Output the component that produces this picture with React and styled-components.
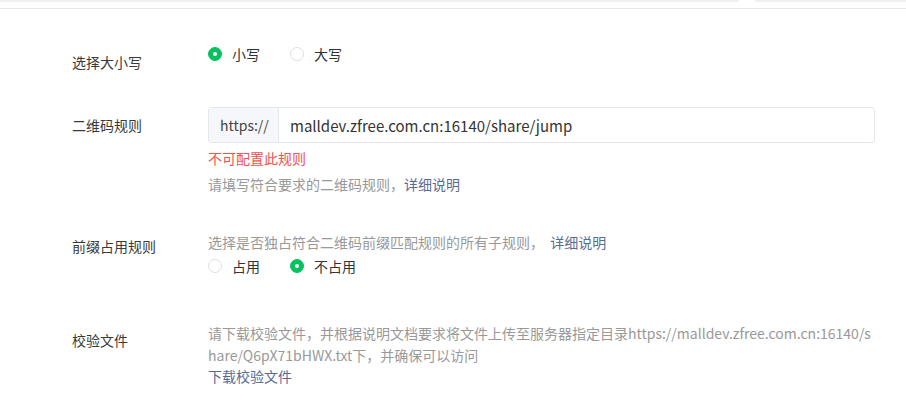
import React from "react";
import styled, { createGlobalStyle } from "styled-components";

const GlobalStyle = createGlobalStyle`
  html, body {
    margin: 0;
    padding: 0;
    background: #fff;
  }
  body {
    font-family: "Noto Sans CJK SC", "Noto Sans", sans-serif;
    font-size: 14px;
    color: #333;
  }
`;

const Page = styled.div`
  width: 906px;
  height: 415px;
  overflow: hidden;
  background: #fff;
`;

const TopStrip = styled.div`
  display: flex;
  gap: 16px;
  height: 2px;

  span {
    background: #f0f0f0;
  }
  span:first-child {
    width: 739px;
  }
  span:last-child {
    flex: 1;
  }
`;

const Divider = styled.div`
  margin-top: 6px;
  height: 1px;
  background: #e8e8e8;
`;

const Form = styled.div`
  padding: 35px 31px 0 72px;
`;

const FormItem = styled.div`
  display: flex;
  align-items: flex-start;
  margin-bottom: ${(p) => p.$mb || 40}px;
`;

const Label = styled.div`
  width: 136px;
  flex-shrink: 0;
  line-height: ${(p) => p.$lh || 36}px;
  color: #3a3a3a;
  font-size: 14px;
`;

const Content = styled.div`
  flex: 1;
  min-width: 0;
`;

const RadioGroup = styled.div`
  display: flex;
  align-items: center;
  height: 20px;
  margin-top: ${(p) => p.$mt || 0}px;
`;

const RadioItem = styled.label`
  display: flex;
  align-items: center;
  margin-right: 30px;
  color: #333;
  font-size: 14px;
  line-height: 20px;
  cursor: pointer;
`;

const RadioCircle = styled.span`
  width: 14px;
  height: 14px;
  box-sizing: border-box;
  border-radius: 50%;
  border: 1px solid ${(p) => (p.$checked ? "#07c160" : "#dcdfe6")};
  background: ${(p) => (p.$checked ? "#07c160" : "#fff")};
  display: flex;
  align-items: center;
  justify-content: center;
  margin-right: 10px;

  &::after {
    content: "";
    width: 4px;
    height: 4px;
    border-radius: 50%;
    background: #fff;
    display: ${(p) => (p.$checked ? "block" : "none")};
  }
`;

const InputGroup = styled.div`
  display: flex;
  height: 36px;
  box-sizing: border-box;
  border: 1px solid #e4e7ed;
  border-radius: 3px;
  overflow: hidden;
`;

const Prepend = styled.div`
  width: 70px;
  flex-shrink: 0;
  box-sizing: border-box;
  padding-left: 11px;
  background: #f5f7fa;
  border-right: 1px solid #e4e7ed;
  display: flex;
  align-items: center;
  color: #444;
  font-size: 14px;
`;

const InputValue = styled.div`
  flex: 1;
  padding-left: 11px;
  display: flex;
  align-items: center;
  color: #333;
  font-size: 15px;
`;

const ErrorText = styled.div`
  margin-top: 5px;
  line-height: 20px;
  color: #f05353;
  font-size: 14px;
`;

const Hint = styled.div`
  color: #999;
  font-size: 14px;
  line-height: ${(p) => p.$lh || 20}px;
  margin-top: ${(p) => p.$mt || 0}px;
  word-break: break-all;
`;

const Link = styled.a`
  color: #576b95;
  text-decoration: none;
  cursor: pointer;
`;

const LinkLine = styled.div`
  line-height: 20px;
  font-size: 14px;
`;

function Radio({ checked, children }) {
  return (
    <RadioItem>
      <RadioCircle $checked={checked} />
      {children}
    </RadioItem>
  );
}

export default function App() {
  return (
    <Page>
      <GlobalStyle />
      <TopStrip>
        <span />
        <span />
      </TopStrip>
      <Divider />
      <Form>
        <FormItem $mb={27}>
          <Label>选择大小写</Label>
          <Content>
            <RadioGroup>
              <Radio checked>小写</Radio>
              <Radio>大写</Radio>
            </RadioGroup>
          </Content>
        </FormItem>

        <FormItem $mb={37}>
          <Label>二维码规则</Label>
          <Content>
            <InputGroup>
              <Prepend>https://</Prepend>
              <InputValue>malldev.zfree.com.cn:16140/share/jump</InputValue>
            </InputGroup>
            <ErrorText>不可配置此规则</ErrorText>
            <Hint $mt={6}>
              请填写符合要求的二维码规则，<Link>详细说明</Link>
            </Hint>
          </Content>
        </FormItem>

        <FormItem $mb={46}>
          <Label $lh={30}>前缀占用规则</Label>
          <Content>
            <Hint $lh={22}>
              选择是否独占符合二维码前缀匹配规则的所有子规则，&nbsp;&nbsp;<Link>详细说明</Link>
            </Hint>
            <RadioGroup $mt={3}>
              <Radio>占用</Radio>
              <Radio checked>不占用</Radio>
            </RadioGroup>
          </Content>
        </FormItem>

        <FormItem>
          <Label>校验文件</Label>
          <Content>
            <Hint $lh={22}>
              请下载校验文件，并根据说明文档要求将文件上传至服务器指定目录https://malldev.zfree.com.cn:16140/share/Q6pX71bHWX.txt下，并确保可以访问
            </Hint>
            <LinkLine>
              <Link>下载校验文件</Link>
            </LinkLine>
          </Content>
        </FormItem>
      </Form>
    </Page>
  );
}
